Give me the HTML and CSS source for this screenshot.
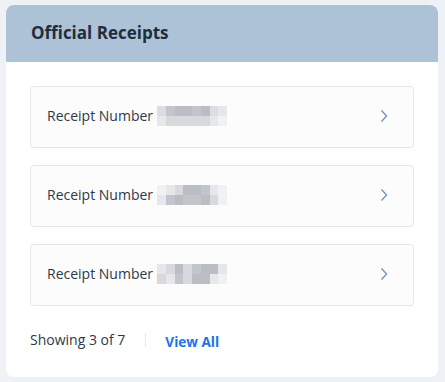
FILE: index.html
```html
<!DOCTYPE html>
<html lang="en">
<head>
  <meta charset="UTF-8" />
  <title>Official Receipts</title>
  <link rel="stylesheet" href="styles.css">
</head>
<body>

  <div class="card">
    <div class="card-header">
      <h2>Official Receipts</h2>
    </div>
    <div class="card-body">
      <div class="receipt">
        <span class="label">Receipt Number</span>
        <span class="blur">
          <i class="a"></i><i class="b"></i><i class="c"></i><i class="c"></i><i class="b"></i><i class="c"></i><i class="a"></i><i class="d"></i>
          <i class="d"></i><i class="e"></i><i class="e"></i><i class="e"></i><i class="e"></i><i class="e"></i><i class="d"></i><i class="f"></i>
        </span>
        <svg class="chev" width="8" height="14" viewBox="0 0 8 14"><path d="M1.5 1.5 L6.5 7 L1.5 12.5" fill="none" stroke="#7f98b8" stroke-width="1.5"/></svg>
      </div>
      <div class="receipt">
        <span class="label">Receipt Number</span>
        <span class="blur">
          <i class="f"></i><i class="d"></i><i class="e"></i><i class="c"></i><i class="c"></i><i class="b"></i><i class="d"></i><i class="f"></i>
          <i class="d"></i><i class="b"></i><i class="c"></i><i class="b"></i><i class="b"></i><i class="c"></i><i class="e"></i><i class="f"></i>
        </span>
        <svg class="chev" width="8" height="14" viewBox="0 0 8 14"><path d="M1.5 1.5 L6.5 7 L1.5 12.5" fill="none" stroke="#7f98b8" stroke-width="1.5"/></svg>
      </div>
      <div class="receipt">
        <span class="label">Receipt Number</span>
        <span class="blur">
          <i class="d"></i><i class="e"></i><i class="c"></i><i class="e"></i><i class="b"></i><i class="c"></i><i class="c"></i><i class="d"></i>
          <i class="e"></i><i class="d"></i><i class="b"></i><i class="e"></i><i class="c"></i><i class="c"></i><i class="d"></i><i class="f"></i>
        </span>
        <svg class="chev" width="8" height="14" viewBox="0 0 8 14"><path d="M1.5 1.5 L6.5 7 L1.5 12.5" fill="none" stroke="#7f98b8" stroke-width="1.5"/></svg>
      </div>

      <div class="footer">
        <span class="count">Showing 3 of 7</span>
        <span class="sep"></span>
        <a class="view-all" href="#">View All</a>
      </div>
    </div>
  </div>

</body>
</html>
```

FILE: styles.css
```css
body {
  margin: 0;
  padding: 5px 7px 5px 6px;
  background-color: #eef1f6;
  font-family: "Open Sans", sans-serif;
  color: #2d3a4a;
}
.card {
  background: #fff;
  border-radius: 8px;
  overflow: hidden;
  height: 372px;
  box-sizing: border-box;
}
.card-header {
  background: #adc2d6;
  height: 57px;
  display: flex;
  align-items: center;
  padding: 0 25px;
}
.card-header h2 {
  margin: 0;
  font-size: 17px;
  font-weight: 700;
  color: #1f2d3d;
  position: relative;
  top: -1px;
}
.card-body {
  padding: 24px 24px 0 24px;
  display: flex;
  flex-direction: column;
  gap: 17px;
}
.receipt {
  height: 57px;
  border: 1px solid #e3e8ef;
  border-radius: 4px;
  background: #fcfcfd;
  display: flex;
  align-items: center;
  padding: 0 25px 3px 16px;
}
.label {
  font-size: 14px;
  color: #2d3a4a;
}
.blur {
  margin-left: 4px;
  width: 70px;
  height: 20px;
  display: grid;
  grid-template-columns: repeat(8, 1fr);
  grid-template-rows: 1fr 1fr;
  opacity: 0.9;
}
.blur i { display: block; }
.blur .a { background: #d7dadf; }
.blur .b { background: #bcc0c6; }
.blur .c { background: #b3b7bd; }
.blur .d { background: #e3e5e8; }
.blur .e { background: #d3d6da; }
.blur .f { background: #eef0f2; }
.chev {
  margin-left: auto;
}
.footer {
  display: flex;
  align-items: center;
  margin-top: 7px;
  font-size: 14px;
}
.count {
  color: #2d3a4a;
}
.sep {
  width: 1px;
  height: 14px;
  background: #e3e8ef;
  margin: 0 19px 0 20px;
}
.view-all {
  color: #1a73e8;
  font-weight: 700;
  font-size: 13.6px;
  text-decoration: none;
  position: relative;
  top: 2px;
}
```
